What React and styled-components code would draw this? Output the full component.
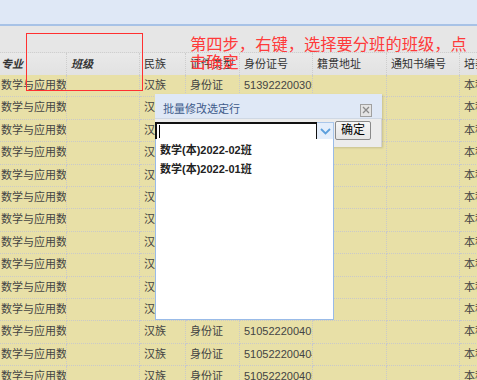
import React from 'react'
import styled, { createGlobalStyle } from 'styled-components'

const GlobalStyle = createGlobalStyle`
  * { box-sizing: border-box; }
  html, body {
    margin: 0;
    padding: 0;
    background: #e6e6e6;
    font-family: "Liberation Sans", "Noto Sans CJK SC", sans-serif;
  }
`

const COLUMNS = '70px 73px 46px 54px 73px 74px 73px 80px'

const Page = styled.div`
  position: relative;
  width: 477px;
  height: 380px;
  overflow: hidden;
  background: #e6e6e6;
`

const TopBar = styled.div`
  height: 26px;
  background: #dfe8f6;
  border-bottom: 2px solid #a7c2e6;
`

const Toolbar = styled.div`
  height: 26px;
  background: #e6e6e6;
`

const Grid = styled.div`
  margin-left: -3px;
  width: 546px;
`

const HeaderRow = styled.div`
  display: grid;
  grid-template-columns: ${COLUMNS};
  height: 23px;
  background: linear-gradient(#e9e9e9, #e2e2e2);
  border-top: 1px dotted #cfcfcf;
`

const HeaderCell = styled.div`
  padding: 0 4px;
  border-right: 1px dotted #cdcdcd;
  line-height: 22px;
  font-size: 11px;
  color: #333;
  white-space: nowrap;
  overflow: hidden;
  font-weight: ${p => (p.$sorted ? 'bold' : 'normal')};
  font-style: ${p => (p.$sorted ? 'italic' : 'normal')};
`

const Row = styled.div`
  display: grid;
  grid-template-columns: ${COLUMNS};
  height: 22.4px;
  background: #e8e0a7;
`

const Cell = styled.div`
  padding: 0 4px;
  border-right: 1px dotted #c9c9c9;
  border-bottom: 1px dotted #c9c9c9;
  line-height: 21px;
  font-size: 11px;
  color: #444;
  white-space: nowrap;
  overflow: hidden;
`

const RedFrame = styled.div`
  position: absolute;
  left: 26px;
  top: 33px;
  width: 117px;
  height: 58px;
  border: 1.3px solid #ff3030;
`

const Note = styled.div`
  position: absolute;
  left: 190px;
  top: 36px;
  width: 285px;
  font-size: 16.3px;
  line-height: 17.5px;
  color: #ff3a3a;
`

const Dialog = styled.div`
  position: absolute;
  left: 155px;
  top: 94px;
  width: 227px;
  display: flex;
  flex-direction: column;
  box-shadow: 1px 1px 2px rgba(0, 0, 0, 0.15);
`

const DialogHeader = styled.div`
  height: 24px;
  display: flex;
  align-items: center;
  justify-content: space-between;
  padding: 0 10px 0 8px;
  background: #dfe8f6;
`

const Title = styled.span`
  font-size: 11px;
  color: #3d5a8a;
  padding-top: 4px;
`

const CloseButton = styled.div`
  width: 12px;
  height: 13px;
  margin-top: 8px;
  border: 1px solid #a0a0a0;
  background: #e4e4e4;
  display: flex;
  align-items: center;
  justify-content: center;
`

const DialogBody = styled.div`
  height: 29px;
  display: flex;
  align-items: flex-start;
  gap: 1px;
  padding-top: 1px;
  background: #ececec;
  border-top: 1px solid #cfd8e4;
  border-right: 1px solid #d2d2d2;
`

const Combo = styled.div`
  display: flex;
  height: 19px;
  margin-top: 2px;
`

const InputBox = styled.div`
  width: 162px;
  height: 19px;
  background: #fff;
  border: 2px solid #111;
  border-right-width: 1px;
  display: flex;
  align-items: center;
  padding-left: 2px;
`

const Caret = styled.span`
  width: 1px;
  height: 13px;
  background: #000;
`

const Trigger = styled.div`
  width: 17px;
  height: 19px;
  background: #e4eefb;
  border: 1px solid #a9c6ea;
  border-left: none;
  display: flex;
  align-items: center;
  justify-content: center;
`

const Button = styled.div`
  width: 36px;
  height: 19px;
  margin-top: 1px;
  border: 1px solid #8a8a8a;
  border-radius: 2px;
  background: linear-gradient(#f6f6f6, #e6e6e6);
  font-size: 12px;
  line-height: 17px;
  text-align: center;
  color: #000;
`

const List = styled.div`
  position: absolute;
  left: 155px;
  top: 139px;
  width: 179px;
  height: 181px;
  background: #fff;
  border: 1px solid #99bbe8;
  border-top: none;
  padding-top: 2px;
`

const Item = styled.div`
  height: 19px;
  line-height: 19px;
  padding-left: 4px;
  font-size: 11px;
  font-weight: bold;
  color: #222;
`

const headers = [
  { label: '专业', sorted: true },
  { label: '班级', sorted: true },
  { label: '民族' },
  { label: '证件类型' },
  { label: '身份证号' },
  { label: '籍贯地址' },
  { label: '通知书编号' },
  { label: '培养层次' },
]

const ids = [
  '513922200305121234',
  '510522200401023456',
  '510522200312067890',
  '510522200402151111',
  '510522200311093333',
  '510522200407224444',
  '510522200401185555',
  '510522200402286666',
  '510522200406307777',
  '510522200308148888',
  '510522200406019999',
  '510522200401110000',
  '510522200404201212',
  '510522200405121313',
]

const rows = ids.map(id => ['数学与应用数学', '', '汉族', '身份证', id, '', '', '本科'])

const App = () => (
  <Page>
    <GlobalStyle />
    <TopBar />
    <Toolbar />
    <Grid>
      <HeaderRow>
        {headers.map(h => (
          <HeaderCell key={h.label} $sorted={h.sorted}>
            {h.label}
          </HeaderCell>
        ))}
      </HeaderRow>
      {rows.map((r, i) => (
        <Row key={i}>
          {r.map((v, j) => (
            <Cell key={j}>{v}</Cell>
          ))}
        </Row>
      ))}
    </Grid>

    <RedFrame />
    <Note>第四步，右键，选择要分班的班级，点击确定</Note>

    <Dialog>
      <DialogHeader>
        <Title>批量修改选定行</Title>
        <CloseButton>
          <svg width="8" height="8" viewBox="0 0 8 8">
            <path d="M1 1L7 7M7 1L1 7" stroke="#8a8a8a" strokeWidth="1.3" />
          </svg>
        </CloseButton>
      </DialogHeader>
      <DialogBody>
        <Combo>
          <InputBox>
            <Caret />
          </InputBox>
          <Trigger>
            <svg width="11" height="7" viewBox="0 0 11 7">
              <path d="M1 1L5.5 5.5L10 1" fill="none" stroke="#5c9fdc" strokeWidth="1.8" />
            </svg>
          </Trigger>
        </Combo>
        <Button>确定</Button>
      </DialogBody>
    </Dialog>

    <List>
      <Item>数学(本)2022-02班</Item>
      <Item>数学(本)2022-01班</Item>
    </List>
  </Page>
)

export default App
